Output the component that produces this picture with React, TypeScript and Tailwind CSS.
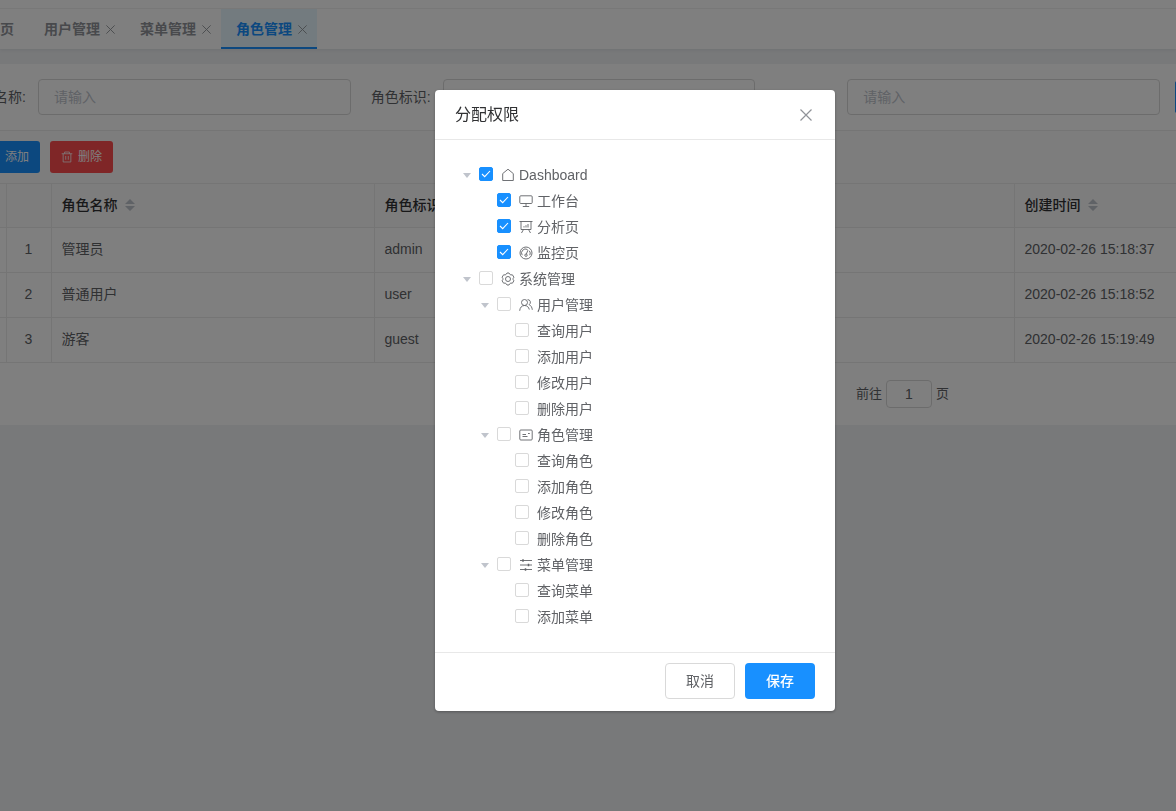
import { FunctionComponent, ReactNode } from "react";

type IconName =
  | "home"
  | "monitor"
  | "board"
  | "gauge"
  | "gear"
  | "users"
  | "card"
  | "sliders"
  | "trash";

const shapes: Record<IconName, ReactNode> = {
  home: <path d="M1.700 12.500V5.600L7 1.200l5.300 4.400v6.900z" />,
  monitor: <path d="M1.800 1.800h10.400a1 1 0 0 1 1 1v5.700a1 1 0 0 1-1 1H1.800a1 1 0 0 1-1-1V2.800a1 1 0 0 1 1-1zM7 9.500v3M3.800 12.500h6.400" />,
  board: (
    <path d="M.5 1.500h13M2 1.500v8h10v-8M4.500 9.500l-2 3.500M9.500 9.500l2 3.500M5 7.500V6.200M7 7.500V5.200M9 7.500V4" />
  ),
  gauge: (
    <>
      <circle cx="7" cy="7" r="6" />
      <path d="M3.200 9.200a4 4 0 0 1 5.300-5.700M10.300 4.800a4 4 0 0 1 .5 4.400M8.900 4.200L7.400 8" />
      <circle cx="7" cy="9.200" r="1.200" />
    </>
  ),
  gear: (
    <>
      <path d="M5.200 2.300L6 1h2l.8 1.300 1 .6 1.600-.1 1.500 2.400-.8 1.300v1l.8 1.300-1.500 2.400-1.600-.1-1 .6L8 13H6l-.8-1.300-1-.6-1.600.1L1.100 8.800l.8-1.300v-1l-.8-1.300 1.500-2.400 1.600.1z" />
      <circle cx="7" cy="7" r="2.500" />
    </>
  ),
  users: (
    <>
      <circle cx="5.500" cy="4.500" r="3" />
      <path d="M.7 12.800c.2-3.200 2-5.300 4.800-5.300s4.200 1.800 4.800 4M8.600 1.600a2.700 2.700 0 0 1 1.500 5c1.900.9 3 2.800 3.200 5.200" />
    </>
  ),
  card: <path d="M1.800 2h10.400a1 1 0 0 1 1 1v8a1 1 0 0 1-1 1H1.800a1 1 0 0 1-1-1V3a1 1 0 0 1 1-1zM3.500 6.500h3.500M3.500 8.500h5M9 5.500h1.800" />,
  sliders: (
    <>
      <path d="M1 2.500h12M1 7h12M1 11.500h12" />
      <path d="M4 1.200v2.600M9.500 5.700v2.600M6.500 10.200v2.600" strokeWidth="1.500" />
    </>
  ),
  trash: <path d="M.8 3.200h12.400M4.200 3.200V1.200h5.600v2M2.500 3.200v9.600h9V3.200M5.500 5.800v4.400M8.500 5.800v4.400" />,
};

const Icon: FunctionComponent<{ name: IconName; className?: string }> = ({
  name,
  className = "size-3.5",
}) => (
  <svg
    className={`shrink-0 ${className}`}
    viewBox="0 0 14 14"
    fill="none"
    stroke="currentColor"
    strokeWidth="0.9"
    aria-hidden="true"
  >
    {shapes[name]}
  </svg>
);

const Cross: FunctionComponent<{ className: string }> = ({ className }) => (
  <svg className={className} viewBox="0 0 12 12" fill="none" stroke="currentColor" strokeWidth="1.2" aria-hidden="true">
    <path d="M.5.5l11 11M11.500.5l-11 11" />
  </svg>
);

const SortCaret: FunctionComponent = () => (
  <svg className="h-3 w-2.5 shrink-0 fill-[#bfc4cc]" viewBox="0 0 10 12" aria-hidden="true">
    <path d="M5 0l5 5H0zM0 7h10l-5 5z" />
  </svg>
);

const Tab: FunctionComponent<{ title: string; active?: boolean }> = ({ title, active }) => (
  <div
    className={`flex h-10 shrink-0 items-center border-b-2 pt-0.5 pl-[15px] pr-2 ${
      active ? "border-[#1890ff] bg-[#e6f7ff]" : "border-transparent"
    }`}
  >
    <a
      href="#"
      className={`font-bold whitespace-nowrap ${active ? "text-[#1890ff]" : "text-[#909399]"}`}
    >
      {title}
    </a>
    <button type="button" aria-label={`关闭${title}`} className="ml-1 flex size-[13px] items-center justify-center text-[#909399]">
      <Cross className="size-[9px]" />
    </button>
  </div>
);

const inputStyle =
  "h-9 w-full min-w-0 flex-1 rounded border border-[#d9d9d9] bg-white px-[15px] placeholder:text-[#c0c4cc]";

type Role = { id: number; name: string; code: string; created: string };

const roles: Role[] = [
  { id: 1, name: "管理员", code: "admin", created: "2020-02-26 15:18:37" },
  { id: 2, name: "普通用户", code: "user", created: "2020-02-26 15:18:52" },
  { id: 3, name: "游客", code: "guest", created: "2020-02-26 15:19:49" },
];

type Node = { label: string; icon?: IconName; checked?: boolean; children?: Node[] };

const permissions: Node[] = [
  {
    label: "Dashboard",
    icon: "home",
    checked: true,
    children: [
      { label: "工作台", icon: "monitor", checked: true },
      { label: "分析页", icon: "board", checked: true },
      { label: "监控页", icon: "gauge", checked: true },
    ],
  },
  {
    label: "系统管理",
    icon: "gear",
    children: [
      {
        label: "用户管理",
        icon: "users",
        children: [{ label: "查询用户" }, { label: "添加用户" }, { label: "修改用户" }, { label: "删除用户" }],
      },
      {
        label: "角色管理",
        icon: "card",
        children: [{ label: "查询角色" }, { label: "添加角色" }, { label: "修改角色" }, { label: "删除角色" }],
      },
      {
        label: "菜单管理",
        icon: "sliders",
        children: [{ label: "查询菜单" }, { label: "添加菜单" }],
      },
    ],
  },
];

const TreeNode: FunctionComponent<{ node: Node }> = ({ node }) => (
  <li>
    <div className="flex h-[26px] items-center">
      {node.children ? (
        <button type="button" aria-label={`收起${node.label}`} className="flex w-6 justify-center">
          <svg className="h-[5px] w-2 fill-[#c0c4cc]" viewBox="0 0 8 5" aria-hidden="true">
            <path d="M0 0h8L4 5z" />
          </svg>
        </button>
      ) : (
        <span className="w-6" />
      )}
      <label className="flex items-center">
        <span className="relative mr-2 mb-0.5 flex">
          <input
            type="checkbox"
            defaultChecked={node.checked}
            className="peer size-3.5 appearance-none rounded-xs border border-[#d9d9d9] bg-white checked:border-[#1890ff] checked:bg-[#1890ff]"
          />
          <svg
            className="pointer-events-none absolute inset-0 hidden size-3.5 peer-checked:block"
            viewBox="0 0 14 14"
            fill="none"
            stroke="white"
            strokeWidth="1.1"
            aria-hidden="true"
          >
            <path d="M3 7l2.700 2.700L11 4" />
          </svg>
        </span>
        {node.icon && <Icon name={node.icon} className="mr-1 size-3.5" />}
        <span>{node.label}</span>
      </label>
    </div>
    {node.children && (
      <ul className="pl-[18px]">
        {node.children.map((child) => (
          <TreeNode key={child.label} node={child} />
        ))}
      </ul>
    )}
  </li>
);

const PermissionDialog: FunctionComponent = () => (
  <div className="fixed inset-0 flex items-start justify-center overflow-auto bg-black/50 pt-[90px] pl-[94px]">
    <div
      role="dialog"
      aria-labelledby="dialog-title"
      className="w-full max-w-[400px] rounded bg-white shadow-[0_1px_3px_rgba(0,0,0,0.3)]"
    >
      <div className="flex h-[50px] items-center justify-between border-b border-[#e8e8e8] pr-[23px] pl-5">
        <h2 id="dialog-title" className="text-base text-[#303133]">
          分配权限
        </h2>
        <button type="button" aria-label="关闭" className="text-[#909399]">
          <Cross className="size-3" />
        </button>
      </div>
      <ul className="px-5 py-[22px]">
        {permissions.map((node) => (
          <TreeNode key={node.label} node={node} />
        ))}
      </ul>
      <div className="flex justify-end gap-2.5 border-t border-[#e8e8e8] px-5 pt-2.5 pb-3">
        <button type="button" className="h-9 w-[70px] rounded border border-[#d9d9d9] bg-white">
          取消
        </button>
        <button type="button" className="h-9 w-[70px] rounded bg-[#1890ff] font-medium text-white">
          保存
        </button>
      </div>
    </div>
  </div>
);

const App: FunctionComponent = () => {
  return (
    <div className="min-h-screen overflow-hidden bg-[#f0f2f5] font-['Liberation_Sans','Noto_Sans_CJK_SC',sans-serif] text-sm text-[#606266]">
      <header className="bg-white pt-2 shadow-[0_1px_4px_rgba(0,21,41,0.08)]">
        <nav className="flex border-t border-[#f0f0f0]">
          <a href="#" className="flex shrink-0 items-center pr-[15px] font-bold text-[#909399]">
            页
          </a>
          <Tab title="用户管理" />
          <Tab title="菜单管理" />
          <Tab title="角色管理" active />
        </nav>
      </header>

      <main className="mt-[15px] bg-white">
        <form className="flex items-center overflow-hidden border-b border-[#ebebeb] py-[15px]">
          <label htmlFor="role-name" className="mr-3 flex w-[26px] shrink-0 justify-end whitespace-nowrap">
            名称:
          </label>
          <input id="role-name" className={inputStyle} placeholder="请输入" />
          <label htmlFor="role-code" className="mr-3 ml-5 w-[60px] shrink-0 whitespace-nowrap">
            角色标识:
          </label>
          <input id="role-code" className={inputStyle} placeholder="请输入" />
          <label htmlFor="role-note" className="mr-3 ml-5 w-[60px] shrink-0 text-right">
            备注:
          </label>
          <input id="role-note" className={inputStyle} placeholder="请输入" />
          <div className="ml-[15px] w-px shrink-0 overflow-hidden">
            <button type="submit" aria-label="查询" className="block h-8 w-16 rounded-xs bg-[#1890ff]" />
          </div>
        </form>

        <div className="flex gap-2.5 bg-[#fafafa] py-2.5 text-xs">
          <button type="button" className="flex h-8 w-10 items-center justify-end overflow-hidden rounded-r-[3px] bg-[#1890ff] pr-[11px] whitespace-nowrap text-white">
            添加
          </button>
          <button type="button" className="flex h-8 items-center gap-[5px] rounded-[3px] bg-[#ff4d4f] px-[11px] text-white">
            <Icon name="trash" className="size-3" />
            删除
          </button>
        </div>

        <table className="w-full table-fixed border-collapse border-y border-[#ebebeb] text-left">
          <colgroup>
            <col className="w-[6px]" />
            <col className="w-[45px]" />
            <col className="w-[323px]" />
            <col />
            <col className="w-[162px]" />
          </colgroup>
          <thead>
            <tr className="h-11 border-b border-[#ebebeb] bg-[#fafafa] text-[#303133]">
              <td className="border-r border-[#ebebeb]" />
              <td className="border-r border-[#ebebeb]" />
              <th className="border-r border-[#ebebeb] px-2.5 pb-0.5 font-medium">
                <span className="flex items-center gap-[7px]">
                  角色名称
                  <SortCaret />
                </span>
              </th>
              <th className="border-r border-[#ebebeb] px-2.5 pb-0.5 font-medium">
                <span className="flex items-center gap-[7px]">
                  角色标识
                  <SortCaret />
                </span>
              </th>
              <th className="px-2.5 pb-0.5 font-medium">
                <span className="flex items-center gap-[7px]">
                  创建时间
                  <SortCaret />
                </span>
              </th>
            </tr>
          </thead>
          <tbody>
            {roles.map((role) => (
              <tr key={role.id} className="h-[45px] border-b border-[#ebebeb]">
                <td className="border-r border-[#ebebeb]" />
                <td className="border-r border-[#ebebeb] pb-0.5 text-center">{role.id}</td>
                <td className="border-r border-[#ebebeb] px-2.5 pb-0.5">{role.name}</td>
                <td className="border-r border-[#ebebeb] px-2.5 pb-0.5">{role.code}</td>
                <td className="px-2.5 pb-0.5 whitespace-nowrap">{role.created}</td>
              </tr>
            ))}
          </tbody>
        </table>

        <div className="flex items-center justify-end pt-[17px] pr-[227px] pb-[17px] text-[13px]">
          <label htmlFor="page">前往</label>
          <input
            id="page"
            defaultValue="1"
            className="mx-1 h-7 w-[46px] rounded border border-[#d9d9d9] bg-white text-center text-sm"
          />
          <span>页</span>
        </div>
      </main>

      <PermissionDialog />
    </div>
  );
};

export default App;
